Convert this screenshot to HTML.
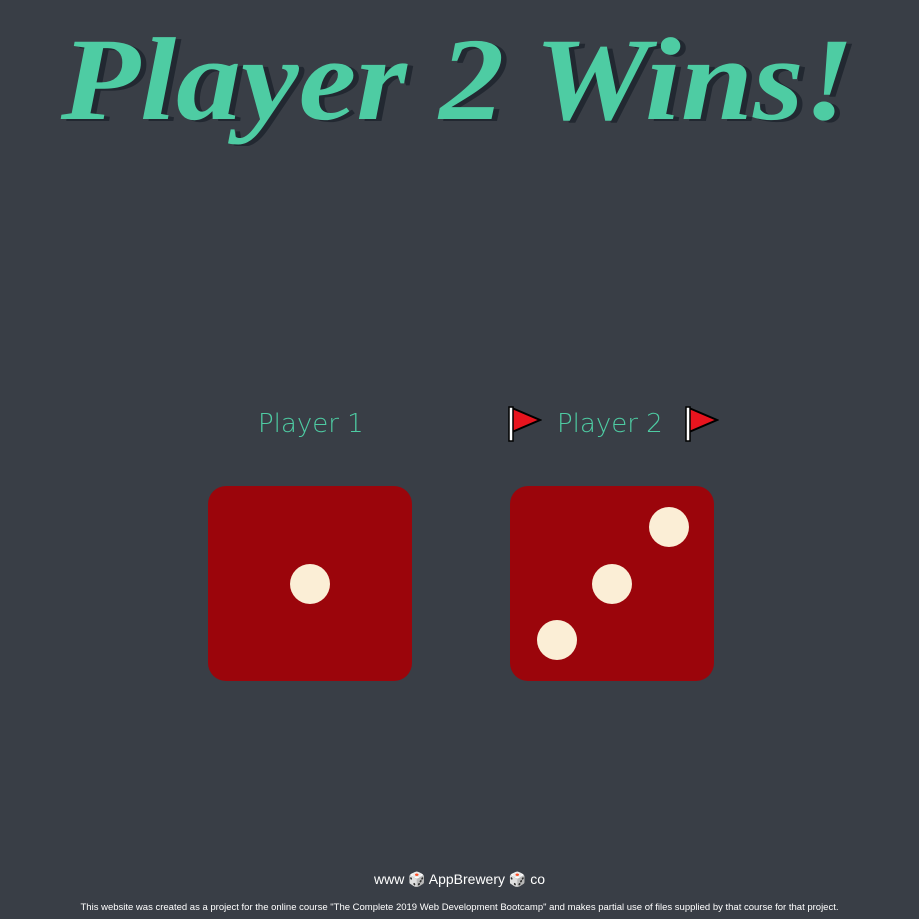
<!DOCTYPE html>
<html><head><style>
html,body{margin:0;padding:0;background:#393E46;width:919px;height:919px;overflow:hidden;position:relative;font-family:"Liberation Sans",sans-serif}
h1{position:absolute;left:0;top:10px;width:919px;margin:0;text-align:center;color:#4ECCA3;font:italic bold 118px/140px "Liberation Serif",serif;text-shadow:5px 2px 0 #222831;transform:scaleX(1.1);transform-origin:480px 0}
.lab{position:absolute;top:409px;color:#4ECCA3;font:26px "DejaVu Sans",sans-serif;font-weight:200}
.die{position:absolute;top:486px;width:204px;height:195px;background:#9B050B;border-radius:18px}
.dot{position:absolute;width:40px;height:40px;border-radius:50%;background:#FBEED6;margin:-20px 0 0 -20px}
.flag{position:absolute;top:404px}
.f1{position:absolute;top:871px;width:919px;text-align:center;color:#fff;font-size:14px}
.f2{position:absolute;top:902px;width:919px;text-align:center;color:#fff;font-size:9.5px}
</style></head><body>
<h1>Player 2 Wins!</h1>
<div class="lab" style="left:258px">Player 1</div>
<div class="lab" style="left:557px">Player 2</div>
<svg class="flag" style="left:506px" width="36" height="40" viewBox="0 0 36 40"><path d="M6 4 L34 16 L6 28Z" fill="#E8141E" stroke="#000" stroke-width="2"/><rect x="3" y="3" width="4" height="34" fill="#fff" stroke="#000" stroke-width="1.5"/></svg>
<svg class="flag" style="left:683px" width="36" height="40" viewBox="0 0 36 40"><path d="M6 4 L34 16 L6 28Z" fill="#E8141E" stroke="#000" stroke-width="2"/><rect x="3" y="3" width="4" height="34" fill="#fff" stroke="#000" stroke-width="1.5"/></svg>
<div class="die" style="left:208px"><div class="dot" style="left:102px;top:98px"></div></div>
<div class="die" style="left:510px"><div class="dot" style="left:159px;top:41px"></div><div class="dot" style="left:102px;top:98px"></div><div class="dot" style="left:47px;top:154px"></div></div>
<div class="f1">www 🎲 AppBrewery 🎲 co</div>
<div class="f2">This website was created as a project for the online course "The Complete 2019 Web Development Bootcamp" and makes partial use of files supplied by that course for that project.</div>
</body></html>
